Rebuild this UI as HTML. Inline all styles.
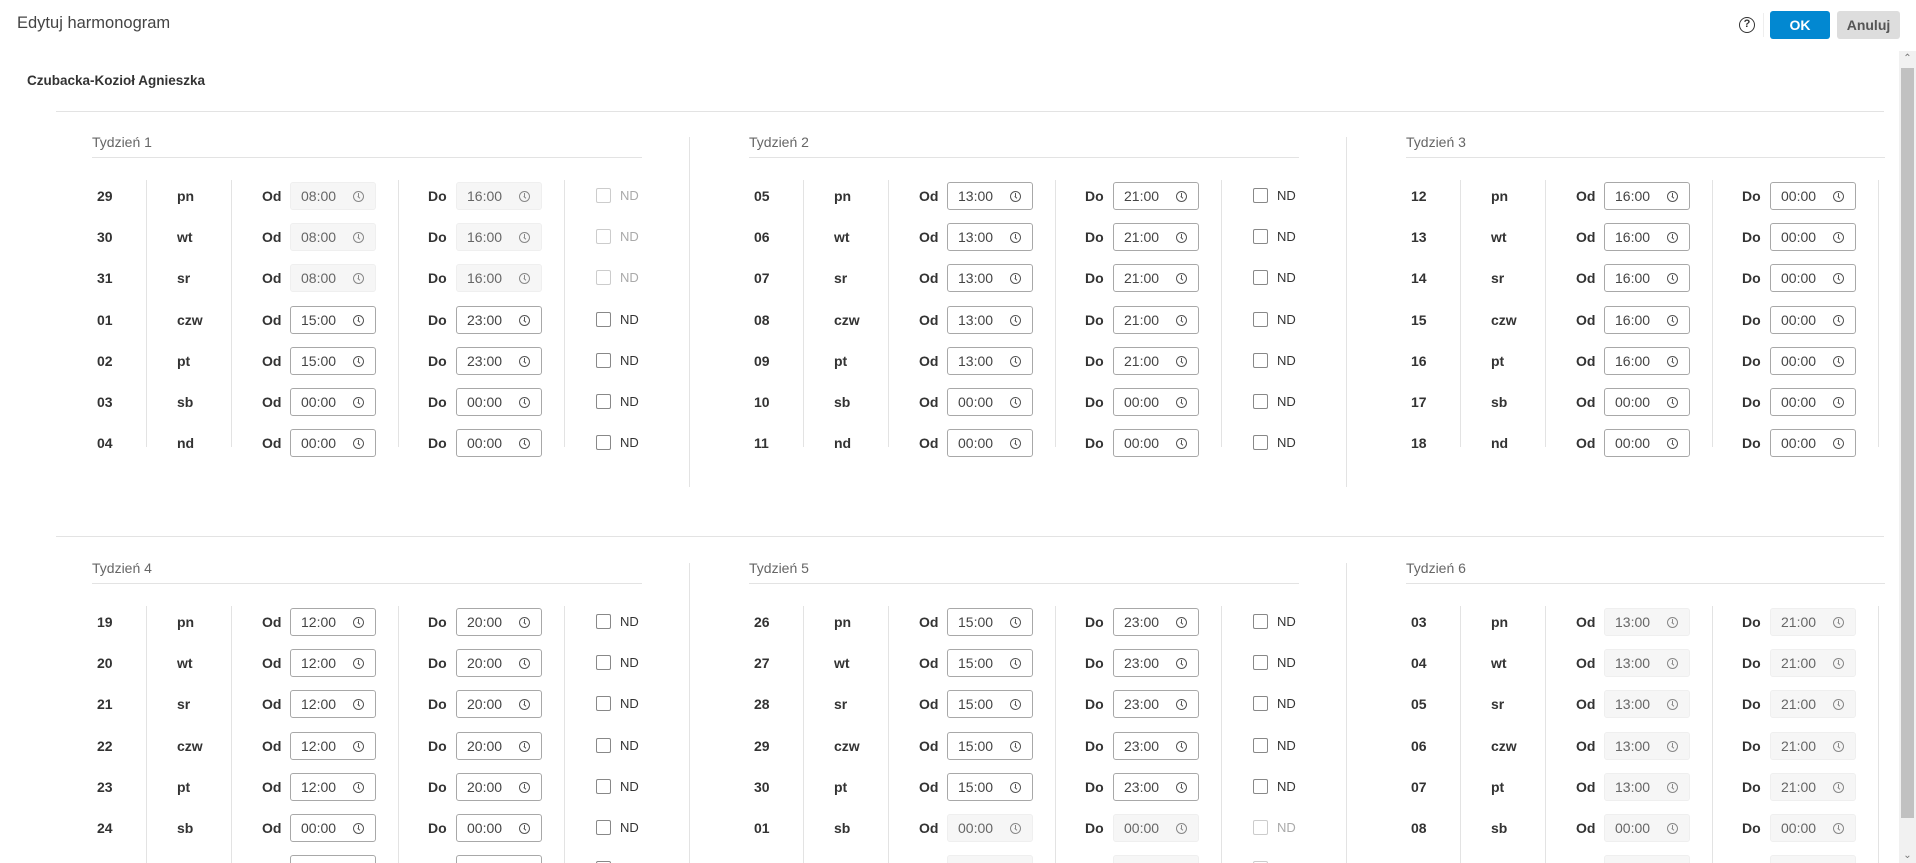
<!DOCTYPE html>
<html><head><meta charset="utf-8">
<style>
*{box-sizing:border-box;margin:0;padding:0}
body{width:1916px;height:863px;overflow:hidden;background:#fff;font-family:"Liberation Sans",Arial,sans-serif;color:#333;position:relative}
.title{position:absolute;left:17px;top:14px;font-size:16.5px;color:#444}
.help{position:absolute;left:1739px;top:17px;width:16px;height:16px;border:1.6px solid #333;border-radius:50%;font-size:11px;font-weight:bold;text-align:center;line-height:13px;color:#333}
.vd{position:absolute;left:1763px;top:13px;width:1px;height:24px;background:#eee}
.ok{position:absolute;left:1770px;top:11px;width:60px;height:28px;background:#0288d1;color:#fff;border-radius:3px;font-weight:bold;font-size:14px;text-align:center;line-height:28px}
.an{position:absolute;left:1837px;top:11px;width:63px;height:28px;background:#ddd;color:#555;border-radius:3px;font-weight:bold;font-size:14px;text-align:center;line-height:28px}
.sb{position:absolute;left:1899px;top:51px;width:17px;height:812px;background:#f1f1f1}
.sb .t{position:absolute;left:2px;top:17px;width:13px;height:750px;background:#c1c1c1}
.sb .u,.sb .dn{position:absolute;left:0;width:17px;text-align:center;font-size:10px;color:#777}
.sb .u{top:2px}.sb .dn{bottom:2px}
.main{position:absolute;left:0;top:0;width:1885px;height:863px;overflow:hidden}
.name{position:absolute;left:27px;top:73px;font-size:13.5px;font-weight:bold;color:#333}
.hd{position:absolute;left:56px;width:1828px;height:1px;background:#e3e3e3}
.wk{position:absolute;width:560px;height:320px}
.wh{position:absolute;left:0;top:0;font-size:14px;color:#666}
.wl{position:absolute;left:0;top:23px;width:550px;height:1px;background:#e3e3e3}
.vs{position:absolute;top:46px;width:1px;height:267px;background:#e3e3e3}
.ws{position:absolute;width:1px;height:350px;background:#e3e3e3}
.r{position:absolute;left:0;width:560px;height:28px;line-height:28px;font-size:14px}
.r b{position:absolute;font-weight:bold;color:#333}
.dt{left:5px}.dy{left:85px}.od{left:170px}.do{left:336px}
.in{position:absolute;top:0;width:86px;height:28px;border:1px solid #a8a8a8;border-radius:3px;padding-left:10px;color:#444;font-size:14px;line-height:26px}
.in1{left:198px}.in2{left:364px}
.in i{position:absolute;right:11px;top:8px;width:11px;height:11px;border:1.3px solid #555;border-radius:50%}
.in i:before{content:"";position:absolute;left:3.5px;top:1px;width:1.2px;height:4px;background:#555}
.in i:after{content:"";position:absolute;left:4px;top:4px;width:3px;height:1.2px;background:#555;transform:rotate(40deg);transform-origin:0 0}
.cb{position:absolute;left:596px;top:6px;width:15px;height:15px;border:1px solid #888;border-radius:2px;background:#fff}
.nd{position:absolute;left:620px;top:0;color:#333;font-size:13px}
.x .in{background:#f6f6f6;border-color:#efefef;color:#666}
.x .in i{border-color:#888}.x .in i:before,.x .in i:after{background:#888}
.x .cb{border-color:#ccc}.x .nd{color:#aaa}
</style></head><body>
<div class="title">Edytuj harmonogram</div>
<div class="help">?</div><div class="vd"></div>
<div class="ok">OK</div><div class="an">Anuluj</div>
<div class="main">
<div class="name">Czubacka-Kozioł Agnieszka</div>
<div class="hd" style="top:111px"></div>
<div class="hd" style="top:536px"></div>
<div class="ws" style="left:689px;top:137px"></div>
<div class="ws" style="left:1346px;top:137px"></div>
<div class="ws" style="left:689px;top:563px;height:300px"></div>
<div class="ws" style="left:1346px;top:563px;height:300px"></div>

<div class="wk" style="left:92px;top:134px">
<div class="wh">Tydzień 1</div><div class="wl"></div>
<div class="vs" style="left:54px"></div><div class="vs" style="left:139px"></div><div class="vs" style="left:306px"></div><div class="vs" style="left:472px"></div>
<div class="r x" style="top:48px"><b class="dt">29</b><b class="dy">pn</b><b class="od">Od</b><span class="in in1">08:00<i></i></span><b class="do">Do</b><span class="in in2">16:00<i></i></span><span class="cb" style="left:504px"></span><span class="nd" style="left:528px">ND</span></div>
<div class="r x" style="top:89px"><b class="dt">30</b><b class="dy">wt</b><b class="od">Od</b><span class="in in1">08:00<i></i></span><b class="do">Do</b><span class="in in2">16:00<i></i></span><span class="cb" style="left:504px"></span><span class="nd" style="left:528px">ND</span></div>
<div class="r x" style="top:130px"><b class="dt">31</b><b class="dy">sr</b><b class="od">Od</b><span class="in in1">08:00<i></i></span><b class="do">Do</b><span class="in in2">16:00<i></i></span><span class="cb" style="left:504px"></span><span class="nd" style="left:528px">ND</span></div>
<div class="r" style="top:172px"><b class="dt">01</b><b class="dy">czw</b><b class="od">Od</b><span class="in in1">15:00<i></i></span><b class="do">Do</b><span class="in in2">23:00<i></i></span><span class="cb" style="left:504px"></span><span class="nd" style="left:528px">ND</span></div>
<div class="r" style="top:213px"><b class="dt">02</b><b class="dy">pt</b><b class="od">Od</b><span class="in in1">15:00<i></i></span><b class="do">Do</b><span class="in in2">23:00<i></i></span><span class="cb" style="left:504px"></span><span class="nd" style="left:528px">ND</span></div>
<div class="r" style="top:254px"><b class="dt">03</b><b class="dy">sb</b><b class="od">Od</b><span class="in in1">00:00<i></i></span><b class="do">Do</b><span class="in in2">00:00<i></i></span><span class="cb" style="left:504px"></span><span class="nd" style="left:528px">ND</span></div>
<div class="r" style="top:295px"><b class="dt">04</b><b class="dy">nd</b><b class="od">Od</b><span class="in in1">00:00<i></i></span><b class="do">Do</b><span class="in in2">00:00<i></i></span><span class="cb" style="left:504px"></span><span class="nd" style="left:528px">ND</span></div>
</div>

<div class="wk" style="left:749px;top:134px">
<div class="wh">Tydzień 2</div><div class="wl"></div>
<div class="vs" style="left:54px"></div><div class="vs" style="left:139px"></div><div class="vs" style="left:306px"></div><div class="vs" style="left:472px"></div>
<div class="r" style="top:48px"><b class="dt">05</b><b class="dy">pn</b><b class="od">Od</b><span class="in in1">13:00<i></i></span><b class="do">Do</b><span class="in in2">21:00<i></i></span><span class="cb" style="left:504px"></span><span class="nd" style="left:528px">ND</span></div>
<div class="r" style="top:89px"><b class="dt">06</b><b class="dy">wt</b><b class="od">Od</b><span class="in in1">13:00<i></i></span><b class="do">Do</b><span class="in in2">21:00<i></i></span><span class="cb" style="left:504px"></span><span class="nd" style="left:528px">ND</span></div>
<div class="r" style="top:130px"><b class="dt">07</b><b class="dy">sr</b><b class="od">Od</b><span class="in in1">13:00<i></i></span><b class="do">Do</b><span class="in in2">21:00<i></i></span><span class="cb" style="left:504px"></span><span class="nd" style="left:528px">ND</span></div>
<div class="r" style="top:172px"><b class="dt">08</b><b class="dy">czw</b><b class="od">Od</b><span class="in in1">13:00<i></i></span><b class="do">Do</b><span class="in in2">21:00<i></i></span><span class="cb" style="left:504px"></span><span class="nd" style="left:528px">ND</span></div>
<div class="r" style="top:213px"><b class="dt">09</b><b class="dy">pt</b><b class="od">Od</b><span class="in in1">13:00<i></i></span><b class="do">Do</b><span class="in in2">21:00<i></i></span><span class="cb" style="left:504px"></span><span class="nd" style="left:528px">ND</span></div>
<div class="r" style="top:254px"><b class="dt">10</b><b class="dy">sb</b><b class="od">Od</b><span class="in in1">00:00<i></i></span><b class="do">Do</b><span class="in in2">00:00<i></i></span><span class="cb" style="left:504px"></span><span class="nd" style="left:528px">ND</span></div>
<div class="r" style="top:295px"><b class="dt">11</b><b class="dy">nd</b><b class="od">Od</b><span class="in in1">00:00<i></i></span><b class="do">Do</b><span class="in in2">00:00<i></i></span><span class="cb" style="left:504px"></span><span class="nd" style="left:528px">ND</span></div>
</div>

<div class="wk" style="left:1406px;top:134px">
<div class="wh">Tydzień 3</div><div class="wl"></div>
<div class="vs" style="left:54px"></div><div class="vs" style="left:139px"></div><div class="vs" style="left:306px"></div><div class="vs" style="left:472px"></div>
<div class="r" style="top:48px"><b class="dt">12</b><b class="dy">pn</b><b class="od">Od</b><span class="in in1">16:00<i></i></span><b class="do">Do</b><span class="in in2">00:00<i></i></span></div>
<div class="r" style="top:89px"><b class="dt">13</b><b class="dy">wt</b><b class="od">Od</b><span class="in in1">16:00<i></i></span><b class="do">Do</b><span class="in in2">00:00<i></i></span></div>
<div class="r" style="top:130px"><b class="dt">14</b><b class="dy">sr</b><b class="od">Od</b><span class="in in1">16:00<i></i></span><b class="do">Do</b><span class="in in2">00:00<i></i></span></div>
<div class="r" style="top:172px"><b class="dt">15</b><b class="dy">czw</b><b class="od">Od</b><span class="in in1">16:00<i></i></span><b class="do">Do</b><span class="in in2">00:00<i></i></span></div>
<div class="r" style="top:213px"><b class="dt">16</b><b class="dy">pt</b><b class="od">Od</b><span class="in in1">16:00<i></i></span><b class="do">Do</b><span class="in in2">00:00<i></i></span></div>
<div class="r" style="top:254px"><b class="dt">17</b><b class="dy">sb</b><b class="od">Od</b><span class="in in1">00:00<i></i></span><b class="do">Do</b><span class="in in2">00:00<i></i></span></div>
<div class="r" style="top:295px"><b class="dt">18</b><b class="dy">nd</b><b class="od">Od</b><span class="in in1">00:00<i></i></span><b class="do">Do</b><span class="in in2">00:00<i></i></span></div>
</div>

<div class="wk" style="left:92px;top:560px;height:303px;overflow:hidden">
<div class="wh">Tydzień 4</div><div class="wl"></div>
<div class="vs" style="left:54px;height:300px"></div><div class="vs" style="left:139px;height:300px"></div><div class="vs" style="left:306px;height:300px"></div><div class="vs" style="left:472px;height:300px"></div>
<div class="r" style="top:48px"><b class="dt">19</b><b class="dy">pn</b><b class="od">Od</b><span class="in in1">12:00<i></i></span><b class="do">Do</b><span class="in in2">20:00<i></i></span><span class="cb" style="left:504px"></span><span class="nd" style="left:528px">ND</span></div>
<div class="r" style="top:89px"><b class="dt">20</b><b class="dy">wt</b><b class="od">Od</b><span class="in in1">12:00<i></i></span><b class="do">Do</b><span class="in in2">20:00<i></i></span><span class="cb" style="left:504px"></span><span class="nd" style="left:528px">ND</span></div>
<div class="r" style="top:130px"><b class="dt">21</b><b class="dy">sr</b><b class="od">Od</b><span class="in in1">12:00<i></i></span><b class="do">Do</b><span class="in in2">20:00<i></i></span><span class="cb" style="left:504px"></span><span class="nd" style="left:528px">ND</span></div>
<div class="r" style="top:172px"><b class="dt">22</b><b class="dy">czw</b><b class="od">Od</b><span class="in in1">12:00<i></i></span><b class="do">Do</b><span class="in in2">20:00<i></i></span><span class="cb" style="left:504px"></span><span class="nd" style="left:528px">ND</span></div>
<div class="r" style="top:213px"><b class="dt">23</b><b class="dy">pt</b><b class="od">Od</b><span class="in in1">12:00<i></i></span><b class="do">Do</b><span class="in in2">20:00<i></i></span><span class="cb" style="left:504px"></span><span class="nd" style="left:528px">ND</span></div>
<div class="r" style="top:254px"><b class="dt">24</b><b class="dy">sb</b><b class="od">Od</b><span class="in in1">00:00<i></i></span><b class="do">Do</b><span class="in in2">00:00<i></i></span><span class="cb" style="left:504px"></span><span class="nd" style="left:528px">ND</span></div>
<div class="r" style="top:295px"><b class="dt">25</b><b class="dy">nd</b><b class="od">Od</b><span class="in in1">00:00<i></i></span><b class="do">Do</b><span class="in in2">00:00<i></i></span><span class="cb" style="left:504px"></span><span class="nd" style="left:528px">ND</span></div>
</div>

<div class="wk" style="left:749px;top:560px;height:303px;overflow:hidden">
<div class="wh">Tydzień 5</div><div class="wl"></div>
<div class="vs" style="left:54px;height:300px"></div><div class="vs" style="left:139px;height:300px"></div><div class="vs" style="left:306px;height:300px"></div><div class="vs" style="left:472px;height:300px"></div>
<div class="r" style="top:48px"><b class="dt">26</b><b class="dy">pn</b><b class="od">Od</b><span class="in in1">15:00<i></i></span><b class="do">Do</b><span class="in in2">23:00<i></i></span><span class="cb" style="left:504px"></span><span class="nd" style="left:528px">ND</span></div>
<div class="r" style="top:89px"><b class="dt">27</b><b class="dy">wt</b><b class="od">Od</b><span class="in in1">15:00<i></i></span><b class="do">Do</b><span class="in in2">23:00<i></i></span><span class="cb" style="left:504px"></span><span class="nd" style="left:528px">ND</span></div>
<div class="r" style="top:130px"><b class="dt">28</b><b class="dy">sr</b><b class="od">Od</b><span class="in in1">15:00<i></i></span><b class="do">Do</b><span class="in in2">23:00<i></i></span><span class="cb" style="left:504px"></span><span class="nd" style="left:528px">ND</span></div>
<div class="r" style="top:172px"><b class="dt">29</b><b class="dy">czw</b><b class="od">Od</b><span class="in in1">15:00<i></i></span><b class="do">Do</b><span class="in in2">23:00<i></i></span><span class="cb" style="left:504px"></span><span class="nd" style="left:528px">ND</span></div>
<div class="r" style="top:213px"><b class="dt">30</b><b class="dy">pt</b><b class="od">Od</b><span class="in in1">15:00<i></i></span><b class="do">Do</b><span class="in in2">23:00<i></i></span><span class="cb" style="left:504px"></span><span class="nd" style="left:528px">ND</span></div>
<div class="r x" style="top:254px"><b class="dt">01</b><b class="dy">sb</b><b class="od">Od</b><span class="in in1">00:00<i></i></span><b class="do">Do</b><span class="in in2">00:00<i></i></span><span class="cb" style="left:504px"></span><span class="nd" style="left:528px">ND</span></div>
<div class="r x" style="top:295px"><b class="dt">02</b><b class="dy">nd</b><b class="od">Od</b><span class="in in1">00:00<i></i></span><b class="do">Do</b><span class="in in2">00:00<i></i></span><span class="cb" style="left:504px"></span><span class="nd" style="left:528px">ND</span></div>
</div>

<div class="wk" style="left:1406px;top:560px;height:303px;overflow:hidden">
<div class="wh">Tydzień 6</div><div class="wl"></div>
<div class="vs" style="left:54px;height:300px"></div><div class="vs" style="left:139px;height:300px"></div><div class="vs" style="left:306px;height:300px"></div><div class="vs" style="left:472px;height:300px"></div>
<div class="r x" style="top:48px"><b class="dt">03</b><b class="dy">pn</b><b class="od">Od</b><span class="in in1">13:00<i></i></span><b class="do">Do</b><span class="in in2">21:00<i></i></span></div>
<div class="r x" style="top:89px"><b class="dt">04</b><b class="dy">wt</b><b class="od">Od</b><span class="in in1">13:00<i></i></span><b class="do">Do</b><span class="in in2">21:00<i></i></span></div>
<div class="r x" style="top:130px"><b class="dt">05</b><b class="dy">sr</b><b class="od">Od</b><span class="in in1">13:00<i></i></span><b class="do">Do</b><span class="in in2">21:00<i></i></span></div>
<div class="r x" style="top:172px"><b class="dt">06</b><b class="dy">czw</b><b class="od">Od</b><span class="in in1">13:00<i></i></span><b class="do">Do</b><span class="in in2">21:00<i></i></span></div>
<div class="r x" style="top:213px"><b class="dt">07</b><b class="dy">pt</b><b class="od">Od</b><span class="in in1">13:00<i></i></span><b class="do">Do</b><span class="in in2">21:00<i></i></span></div>
<div class="r x" style="top:254px"><b class="dt">08</b><b class="dy">sb</b><b class="od">Od</b><span class="in in1">00:00<i></i></span><b class="do">Do</b><span class="in in2">00:00<i></i></span></div>
<div class="r x" style="top:295px"><b class="dt">09</b><b class="dy">nd</b><b class="od">Od</b><span class="in in1">00:00<i></i></span><b class="do">Do</b><span class="in in2">00:00<i></i></span></div>
</div>
</div>
<div class="sb"><div class="u">&#8963;</div><div class="t"></div><div class="dn">&#8964;</div></div>
</body></html>
